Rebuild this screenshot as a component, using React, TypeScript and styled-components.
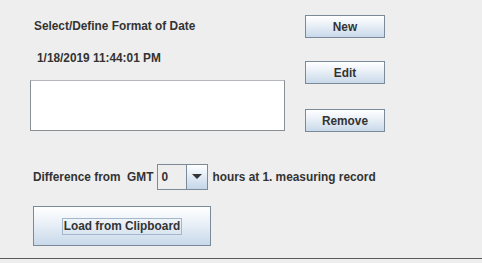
import React from "react";
import styled, { createGlobalStyle } from "styled-components";

const Global = createGlobalStyle`
  html, body { margin: 0; padding: 0; background: #eeeeee; }
  body { font-family: "Liberation Sans", Arial, sans-serif; }
`;

const Panel = styled.div`
  width: 482px;
  height: 259px;
  box-sizing: border-box;
  border-bottom: 1px solid #5a5a5a;
  background: #eeeeee;
  display: flex;
  flex-direction: column;
  color: #333333;
  font-size: 11.85px;
  font-weight: bold;
`;

const Top = styled.div`
  display: flex;
  padding-left: 30px;
`;

const LeftCol = styled.div`
  width: 255px;
  display: flex;
  flex-direction: column;
`;

const Label = styled.div<{ $top: number; $indent: number }>`
  margin-top: ${(p) => p.$top}px;
  padding-left: ${(p) => p.$indent}px;
  line-height: 15px;
  height: 15px;
  white-space: nowrap;
`;

const ListBox = styled.div`
  margin-top: 14px;
  height: 51px;
  box-sizing: border-box;
  background: #ffffff;
  border: 1px solid #8a8f94;
  border-top-color: #b4b8bc;
`;

const ButtonCol = styled.div`
  margin-left: 20px;
  padding-top: 15px;
  display: flex;
  flex-direction: column;
`;

const Btn = styled.button<{ $w: number; $h: number; $gap?: number }>`
  width: ${(p) => p.$w}px;
  height: ${(p) => p.$h}px;
  margin-top: ${(p) => p.$gap ?? 0}px;
  box-sizing: border-box;
  padding: 0;
  border: 1px solid #7a8a99;
  background: linear-gradient(to bottom, #ffffff 0%, #eef3f9 35%, #c9d9ea 100%);
  font-family: "Liberation Sans", Arial, sans-serif;
  font-weight: bold;
  font-size: 11.85px;
  color: #333333;
  display: flex;
  align-items: center;
  justify-content: center;
`;

const FocusText = styled.span`
  border: 1px solid #a3b8cc;
  padding: 0 1px;
  line-height: 15px;
`;

const GmtRow = styled.div`
  margin-top: 32px;
  padding-left: 33px;
  display: flex;
  align-items: center;
  height: 26px;
  white-space: nowrap;
`;

const Combo = styled.div`
  margin-left: 4px;
  width: 51px;
  height: 26px;
  box-sizing: border-box;
  border: 1px solid #7a8a99;
  display: flex;
  background: #eeeeee;
`;

const ComboText = styled.div`
  flex: 1;
  padding-left: 3px;
  line-height: 24px;
`;

const ComboArrow = styled.div`
  width: 20px;
  border-left: 1px solid #7a8a99;
  background: linear-gradient(to bottom, #ffffff 0%, #e6eef7 40%, #c4d6e8 100%);
  display: flex;
  align-items: center;
  justify-content: center;
`;

const After = styled.span`
  margin-left: 4px;
`;

const LoadWrap = styled.div`
  margin-top: 16px;
  padding-left: 33px;
`;

export default function App() {
  return (
    <>
      <Global />
      <Panel>
        <Top>
          <LeftCol>
            <Label $top={19} $indent={4}>Select/Define Format of Date</Label>
            <Label $top={17} $indent={7}>1/18/2019 11:44:01 PM</Label>
            <ListBox />
          </LeftCol>
          <ButtonCol>
            <Btn $w={80} $h={23}>New</Btn>
            <Btn $w={80} $h={23} $gap={23}>Edit</Btn>
            <Btn $w={80} $h={23} $gap={25}>Remove</Btn>
          </ButtonCol>
        </Top>
        <GmtRow>
          <span>Difference from&nbsp; GMT</span>
          <Combo>
            <ComboText>0</ComboText>
            <ComboArrow>
              <svg width="10" height="6" viewBox="0 0 10 6">
                <path d="M0 0 L10 0 L5 5 Z" fill="#333333" />
              </svg>
            </ComboArrow>
          </Combo>
          <After>hours at 1. measuring record</After>
        </GmtRow>
        <LoadWrap>
          <Btn $w={178} $h={40}>
            <FocusText>Load from Clipboard</FocusText>
          </Btn>
        </LoadWrap>
      </Panel>
    </>
  );
}
